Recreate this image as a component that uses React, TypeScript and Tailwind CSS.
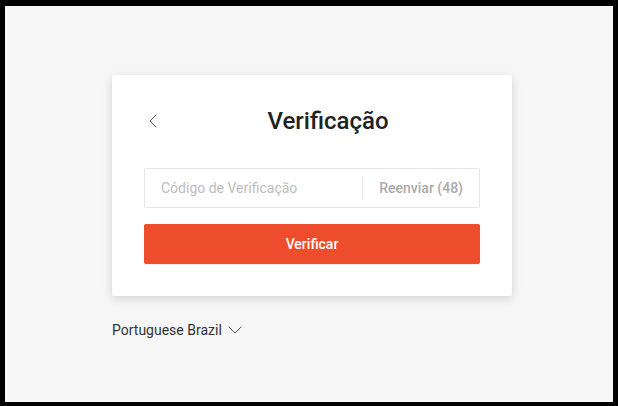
import { ChevronLeft, ChevronDown } from 'lucide-react';

export default function App() {
  return (
    <div className="min-h-[406px] w-[618px] bg-black pb-[4px] pl-[5px] pr-[5px] pt-[6px] font-['Roboto',sans-serif]">
      <div className="h-[396px] bg-[#f6f6f6] pl-[107px] pt-[69px]">
        {/* Card */}
        <div className="w-[400px] rounded-[2px] bg-white px-[32px] pb-[32px] pt-[30px] shadow-[0_3px_10px_rgba(0,0,0,0.14)]">
          <div className="flex h-[32px] items-center">
            <div className="flex w-[32px] items-center">
              <ChevronLeft className="ml-[-3px] h-[24px] w-[24px] text-[#555]" strokeWidth={1} />
            </div>
            <h1 className="flex-1 text-center text-[24px] font-medium leading-[32px] text-[#222]">Verificação</h1>
          </div>

          <div className="mt-[31px] flex h-[40px] items-center rounded-[2px] border border-[#e5e5e5]">
            <input
              className="h-full min-w-0 flex-1 bg-transparent pl-[16px] text-[14px] text-[#222] outline-none placeholder:text-[#bdbdbd]"
              placeholder="Código de Verificação"
            />
            <div className="h-[24px] w-px bg-[#e8e8e8]" />
            <button className="pl-[16px] pr-[16px] text-[14px] font-medium text-[#aaaaaa]">Reenviar (48)</button>
          </div>

          <button className="mt-[16px] h-[40px] w-full rounded-[2px] bg-[#ee4d2d] text-[14px] font-medium text-white shadow-[0_1px_1px_rgba(0,0,0,0.09)]">
            Verificar
          </button>
        </div>

        <div className="mt-[22px] flex items-center gap-[1px] text-[14px] leading-[20px] text-[#333]">
          <span>Portuguese Brazil</span>
          <ChevronDown className="h-[24px] w-[24px] text-[#555]" strokeWidth={1} />
        </div>
      </div>
    </div>
  );
}
